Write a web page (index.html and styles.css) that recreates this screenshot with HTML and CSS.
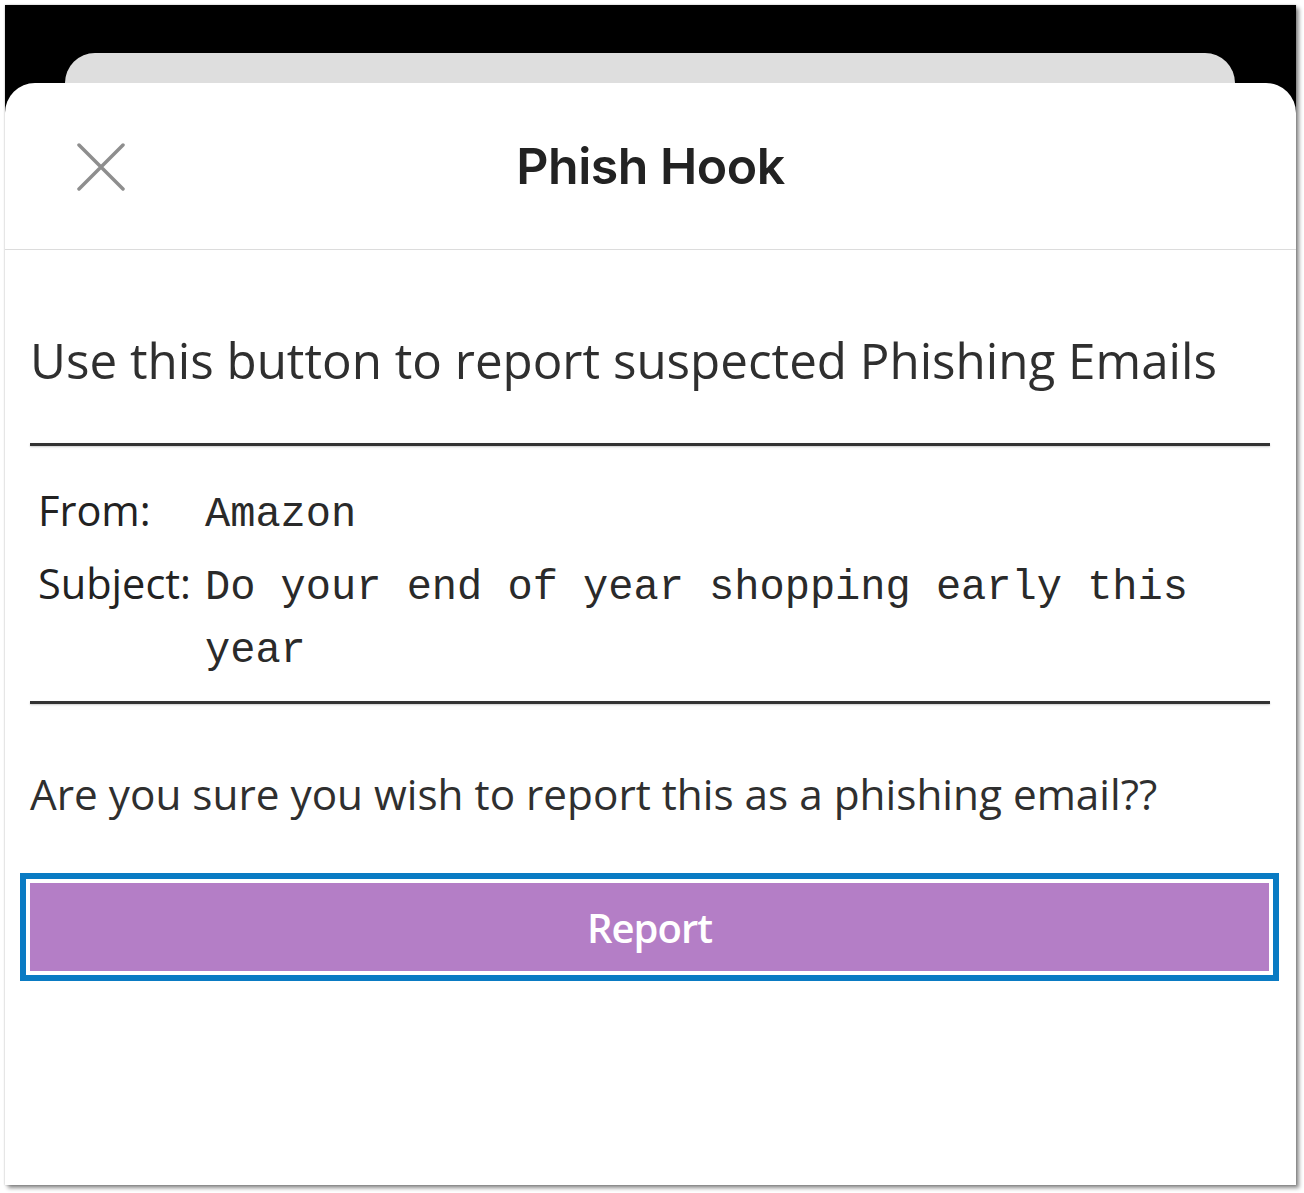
FILE: index.html
```html
<!DOCTYPE html>
<html lang="en">
<head>
  <meta charset="UTF-8">
  <title>Phish Hook</title>
  <link rel="stylesheet" href="styles.css">
</head>
<body>
  <div class="frame">
    <div class="backdrop">
      <div class="card-behind"></div>
    </div>

    <div class="sheet">
      <header class="sheet-header">
        <div class="close">
          <svg width="48" height="48" viewBox="0 0 48 48">
            <path d="M2 2 L46 46 M46 2 L2 46" stroke="#8e8e8e" stroke-width="3.5" stroke-linecap="round" fill="none"/>
          </svg>
        </div>
        <h1>Phish Hook</h1>
        <div></div>
      </header>

      <div class="content">
        <h2>Use this button to report suspected Phishing Emails</h2>
        <hr class="rule">
        <div class="email">
          <div class="label">From:</div>
          <div class="value">Amazon</div>
          <div class="label">Subject:</div>
          <div class="value">Do your end of year shopping early this year</div>
        </div>
        <hr class="rule">
        <p class="question">Are you sure you wish to report this as a phishing email??</p>
        <div class="focus-ring">
          <button class="report">Report</button>
        </div>
      </div>
    </div>
  </div>
</body>
</html>
```

FILE: styles.css
```css
* {
  margin: 0;
  padding: 0;
  box-sizing: border-box;
}
body {
  background-color: #fff;
  padding: 5px 8px 8px 5px;
  font-family: 'Open Sans', 'Noto Sans', sans-serif;
  color: #2f2f2f;
}
.frame {
  width: 1291px;
  height: 1180px;
  background-color: #000;
  display: flex;
  flex-direction: column;
  box-shadow: 3px 3px 4px rgba(0,0,0,0.45), 0 0 2px rgba(0,0,0,0.25);
}
.backdrop {
  padding-top: 48px;
}
.card-behind {
  height: 30px;
  margin: 0 61px 0 60px;
  background-color: #dedede;
  border-radius: 30px 30px 0 0;
}
.sheet {
  flex-grow: 1;
  background-color: #fff;
  border-radius: 30px 30px 0 0;
}
.sheet-header {
  height: 167px;
  display: grid;
  grid-template-columns: 1fr auto 1fr;
  align-items: center;
  border-bottom: 1px solid #dcdcdc;
}
.close {
  padding-left: 72px;
  padding-top: 2px;
  display: flex;
}
.sheet-header h1 {
  font-family: 'Inter', sans-serif;
  font-size: 50px;
  font-weight: 600;
  color: #222;
  letter-spacing: -0.5px;
}
.content {
  padding: 0 26px 0 25px;
}
.content h2 {
  font-size: 49.3px;
  font-weight: 400;
  line-height: 60px;
  margin-top: 80px;
  margin-bottom: 53px;
}
.rule {
  border: none;
  border-top: 3px solid #333;
  box-shadow: 0 1px 2px rgba(0,0,0,0.2);
}
.email {
  display: grid;
  grid-template-columns: 167px 1fr;
  align-items: baseline;
  padding: 33px 0 18px 8px;
  row-gap: 5px;
}
.label {
  font-size: 41.5px;
  line-height: 63px;
  color: #222;
}
.value {
  font-family: 'Liberation Mono', 'Courier New', monospace;
  font-size: 42px;
  line-height: 63px;
  color: #2a2a2a;
}
.question {
  font-size: 42.3px;
  line-height: 56px;
  margin-top: 62px;
  margin-bottom: 51px;
}
.focus-ring {
  margin: 0 -9px 0 -10px;
  border: 6px solid #0a7bc3;
  padding: 4px;
  background-color: #fff;
}
.report {
  display: block;
  width: 100%;
  height: 88px;
  border: none;
  background-color: #b47ec6;
  color: #fff;
  font-family: 'Open Sans', sans-serif;
  font-size: 40px;
  font-weight: 600;
  letter-spacing: -1px;
}
```
